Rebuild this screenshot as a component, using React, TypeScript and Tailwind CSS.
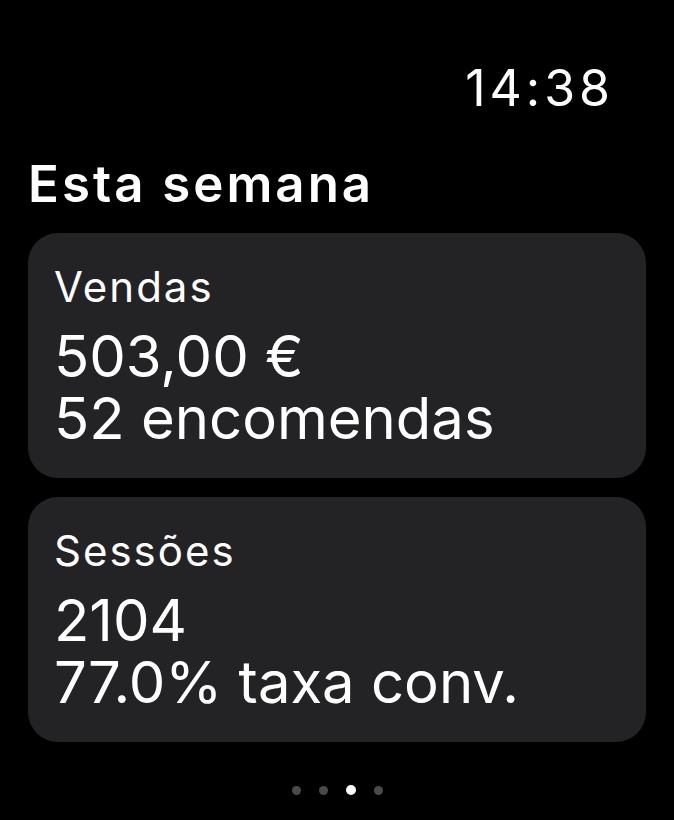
import React from "react";

const Card = ({ label, value, sub }: { label: string; value: string; sub: string }) => (
  <div className="rounded-[30px] bg-[#232325] h-[245px] px-[26px] pt-[28px]">
    <div className="text-[42px] leading-[52px] tracking-[2px] text-white">{label}</div>
    <div className="mt-[12px] text-[58px] leading-[62px] text-white">{value}</div>
    <div className="text-[58px] leading-[62px] text-white">{sub}</div>
  </div>
);

export default function App() {
  return (
    <div className="w-[674px] h-[820px] bg-black overflow-hidden font-['Inter',sans-serif] text-white">
      <div className="px-[28px]">
        <div className="flex justify-end pt-[58px] pr-[32px]">
          <span className="text-[50px] leading-[60px] tracking-[4px]">14:38</span>
        </div>
        <h1 className="mt-[36px] text-[51px] leading-[60px] font-semibold tracking-[3px]">Esta semana</h1>
        <div className="mt-[19px] flex flex-col gap-[19px]">
          <Card label="Vendas" value="503,00 €" sub="52 encomendas" />
          <Card label="Sessões" value="2104" sub="77.0% taxa conv." />
        </div>
        <div className="mt-[43px] flex justify-center items-center gap-[18px]">
          <span className="w-[9px] h-[9px] rounded-full bg-[#4a4a4c]" />
          <span className="w-[9px] h-[9px] rounded-full bg-[#4a4a4c]" />
          <span className="w-[10px] h-[10px] rounded-full bg-white" />
          <span className="w-[9px] h-[9px] rounded-full bg-[#4a4a4c]" />
        </div>
      </div>
    </div>
  );
}
